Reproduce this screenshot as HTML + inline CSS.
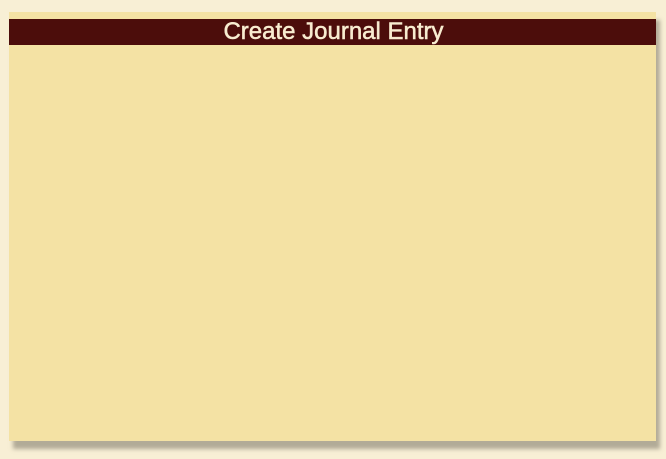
<!DOCTYPE html>
<html><head><meta charset="utf-8"><style>
html,body{margin:0;padding:0;width:666px;height:459px;background:#f8efd5;overflow:hidden}
.panel{position:absolute;left:9px;top:12px;width:647px;height:429px;background:#f4e2a4;box-shadow:4px 8px 4px rgba(120,115,100,0.55)}
.hdr{position:absolute;left:0;top:7px;width:647px;height:26px;background:#4c0d0b;color:#f8ecd0;font-family:"Liberation Sans",Arial,sans-serif;font-size:24px;line-height:26px;text-align:center;letter-spacing:0;-webkit-text-stroke:0.5px #f8ecd0;padding-left:2px;box-sizing:border-box}
</style></head><body>
<div class="panel"><div class="hdr">Create Journal Entry</div></div>
</body></html>
